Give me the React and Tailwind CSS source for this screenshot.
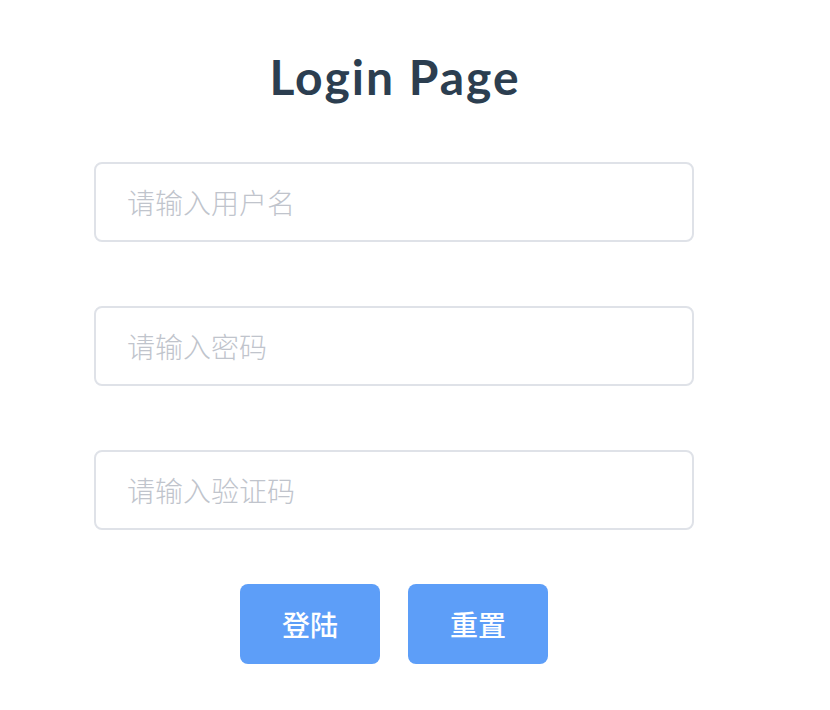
export default function App() {
  const fields = ["请输入用户名", "请输入密码", "请输入验证码"];
  const cjk = { fontFamily: '"Noto Sans CJK SC", sans-serif' };

  return (
    <div className="min-h-[710px] w-[830px] bg-white" style={cjk}>
      <div className="w-[600px] ml-[94px] flex flex-col items-center">
        <h1
          className="mt-[46px] text-[48px] leading-[62px] font-bold tracking-[2px] pl-[2px] text-[#2c3e50]"
          style={{ fontFamily: 'Lato, "Noto Sans", sans-serif' }}
        >
          Login Page
        </h1>
        <div className="mt-[54px] w-full flex flex-col gap-[64px]">
          {fields.map((f) => (
            <input
              key={f}
              placeholder={f}
              type={f === "请输入密码" ? "password" : "text"}
              className="w-full h-[80px] border-2 border-[#dfe2e8] rounded-[8px] px-[31px] text-[28px] font-light text-[#606266] placeholder:text-[#c0c4cc] outline-none"
              style={cjk}
            />
          ))}
        </div>
        <div className="mt-[54px] flex gap-[28px]">
          <button className="w-[140px] h-[80px] rounded-[8px] bg-[#5d9ef8] text-white text-[28px] font-medium">
            登陆
          </button>
          <button className="w-[140px] h-[80px] rounded-[8px] bg-[#5d9ef8] text-white text-[28px] font-medium">
            重置
          </button>
        </div>
      </div>
    </div>
  );
}
